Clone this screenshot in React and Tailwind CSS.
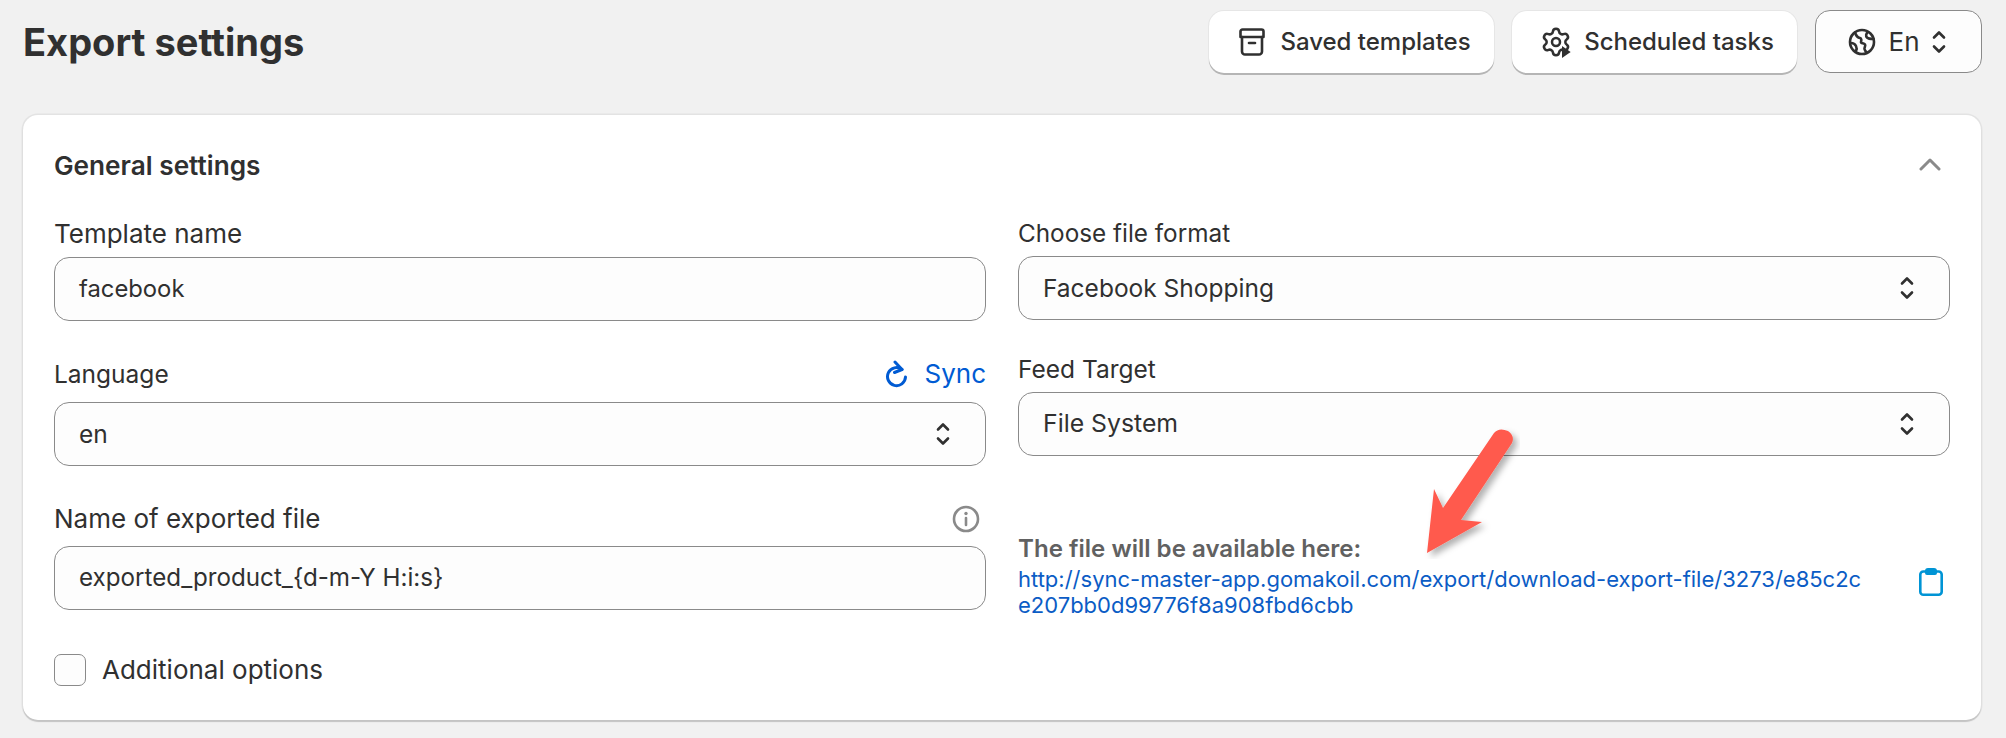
const font = { fontFamily: "Inter, sans-serif" };

const ArchiveIcon = () => (
  <svg viewBox="0 0 26 28" className="h-[28px] w-[26px]" fill="none" stroke="#303030" strokeWidth="2.6" strokeLinejoin="round" strokeLinecap="round">
    <path d="M3.500 1.500h19a2 2 0 0 1 2 2v5.500h-23v-5.500a2 2 0 0 1 2-2z" />
    <path d="M3 9v14.500a3 3 0 0 0 3 3h14a3 3 0 0 0 3-3v-14.500" />
    <path d="M10 15h6" />
  </svg>
);

const GearPlayIcon = () => (
  <svg viewBox="0 0 24 24" className="h-[32px] w-[32px]" fill="none" stroke="#303030" strokeWidth="1.900" strokeLinejoin="round" strokeLinecap="round">
    <path d="M9.671 4.136a2.34 2.34 0 0 1 4.659 0 2.34 2.34 0 0 0 3.319 1.915 2.34 2.34 0 0 1 2.33 4.033 2.34 2.34 0 0 0 0 3.831 2.34 2.34 0 0 1-2.33 4.033 2.34 2.34 0 0 0-3.319 1.915 2.34 2.34 0 0 1-4.659 0 2.34 2.34 0 0 0-3.32-1.915 2.34 2.34 0 0 1-2.33-4.033 2.34 2.34 0 0 0 0-3.831A2.34 2.34 0 0 1 6.35 6.051a2.34 2.34 0 0 0 3.32-1.915" />
    <circle cx="12" cy="12" r="3" />
    <path d="M16.500 15l6.500 4.500-6.500 4.500z" fill="#303030" stroke="none" />
  </svg>
);

const GlobeIcon = () => (
  <svg viewBox="0 0 28 28" className="h-[28px] w-[28px]" fill="none" stroke="#303030" strokeWidth="2.6" strokeLinejoin="round" strokeLinecap="round">
    <circle cx="14" cy="14" r="12" />
    <path d="M7 4.500c1 3 2 5 5 5.500 1.500.3 1.500 2.500 1 4-.5 1.500 3 1 4 2.500 1 1.500-1 3-.5 4.500.3 1 1 2 1.500 3" />
    <path d="M20 4c-2 1.500-2.500 4-1 5.500s4 1.500 6.500 1.500" />
    <path d="M3 15c2.500 0 4 1 5 3s1 3 0 5" />
  </svg>
);

const Selector = () => (
  <svg viewBox="0 0 14 26" className="h-[26px] w-[14px]" fill="none" stroke="#303030" strokeWidth="2.6" strokeLinejoin="round" strokeLinecap="round">
    <path d="M2 8.500l5-5 5 5" />
    <path d="M2 17.500l5 5 5-5" />
  </svg>
);

const Field = ({ children, trailing, size = "text-[24.500px]" }) => (
  <div className={`flex h-[64px] items-center justify-between rounded-[15px] border border-[#8a8a8a] bg-[#fdfdfd] pl-[24px] pr-[35px] text-[#303030] ${size}`}>
    <span>{children}</span>
    {trailing}
  </div>
);

const LabelRow = ({ children, right, className = "" }) => (
  <div className={`flex items-center justify-between leading-[30px] text-[#303030] ${className}`}>
    <span>{children}</span>
    {right}
  </div>
);

const TopButton = ({ icon, children, className = "" }) => (
  <button
    type="button"
    className={`flex h-[62px] w-[285px] items-center justify-center rounded-[15px] bg-white text-[24px] font-medium text-[#303030] shadow-[0_2px_0_#b5b5b5,0_0_0_1px_#e6e6e6] ${className}`}
  >
    {icon}
    {children}
  </button>
);

export default function App() {
  return (
    <main className="relative h-[738px] w-[2006px] overflow-hidden bg-[#f1f1f1]" style={font}>
      <header className="flex h-[115px] items-start justify-between pl-[23px] pr-[24px] pt-[11px]">
        <h1 className="pt-[8px] text-[38px] font-bold leading-[46px] text-[#303030]">Export settings</h1>
        <div className="flex gap-[18px]">
          <TopButton icon={<ArchiveIcon />} className="gap-[15px] pl-[7px]">Saved templates</TopButton>
          <TopButton icon={<GearPlayIcon />} className="gap-[12px] pl-[5px]">Scheduled tasks</TopButton>
          <button
            type="button"
            className="-mt-px flex h-[63px] w-[167px] items-center justify-center rounded-[15px] border border-[#8a8a8a] bg-[#fdfdfd] pr-[4px] text-[26px] text-[#303030]"
          >
            <GlobeIcon />
            <span className="ml-[13px] mr-[12px]">En</span>
            <Selector />
          </button>
        </div>
      </header>

      <section className="relative ml-[23px] h-[605px] w-[1958px] rounded-[15px] bg-white px-[31px] shadow-[0_2px_1px_#c4c4c4,0_0_0_1.500px_#e3e3e3]">
        <div className="flex h-[102px] items-center justify-between pr-[8px]">
          <h2 className="text-[26.200px] font-semibold text-[#303030]">General settings</h2>
          <svg viewBox="0 0 24 14" className="mb-[4px] h-[14px] w-[24px]" fill="none" stroke="#8a8a8a" strokeWidth="3" strokeLinecap="round" strokeLinejoin="round">
            <path d="M3 12l9-9 9 9" />
          </svg>
        </div>

        <div className="grid grid-cols-[932px_932px] gap-x-[32px]">
          <div>
            <LabelRow className="mt-[2px] mb-[8px] text-[26px]">Template name</LabelRow>
            <Field size="text-[23.800px]">facebook</Field>

            <LabelRow
              className="mt-[38px] mb-[13px] text-[24.500px]"
              right={
                <span className="flex items-center gap-[16px] text-[26px] text-[#005bd3]">
                  <svg viewBox="0 0 24 28" className="-ml-[1px] h-[28px] w-[24px]" fill="none" stroke="#005bd3" strokeWidth="3" strokeLinecap="round" strokeLinejoin="round">
                    <path d="M18 9.500a9 9 0 1 0 3.500 7.500" />
                    <path d="M11 2l7 7.500-7.500 3" />
                  </svg>
                  Sync
                </span>
              }
            >
              Language
            </LabelRow>
            <Field trailing={<Selector />}>en</Field>

            <LabelRow
              className="mt-[38px] mb-[12px] text-[26px]"
              right={
                <svg viewBox="0 0 28 28" className="mr-[6px] h-[28px] w-[28px]" fill="none" stroke="#8a8a8a" strokeWidth="2.600" strokeLinecap="round">
                  <circle cx="14" cy="14" r="12" />
                  <path d="M14 13v7" />
                  <circle cx="14" cy="8.500" r="1.700" fill="#8a8a8a" stroke="none" />
                </svg>
              }
            >
              Name of exported file
            </LabelRow>
            <Field size="text-[24.200px]">exported_product_{"{d-m-Y H:i:s}"}</Field>

            <label className="mt-[40px] flex items-center gap-[16px] text-[26px] text-[#303030]">
              <span className="h-[32px] w-[32px] rounded-[7px] border border-[#8a8a8a] bg-[#fdfdfd]" />
              Additional options
            </label>
          </div>

          <div>
            <LabelRow className="mt-[1px] mb-[8px] text-[24.300px]">Choose file format</LabelRow>
            <Field trailing={<Selector />}>Facebook Shopping</Field>

            <LabelRow className="mt-[34px] mb-[8px] text-[24.500px]">Feed Target</LabelRow>
            <Field trailing={<Selector />} size="text-[24.800px]">File System</Field>

            <div className="mt-[79px] flex items-start justify-between pr-[7px]">
              <div className="w-[846px]">
                <p className="text-[24.100px] font-semibold leading-[28px] text-[#616161]">The file will be available here:</p>
                <a href="#" className="mt-[3px] block break-all text-[22px] leading-[26px] text-[#0b5cc5]">
                  http://sync-master-app.gomakoil.com/export/download-export-file/3273/e85c2ce207bb0d99776f8a908fbd6cbb
                </a>
              </div>
              <svg viewBox="0 0 24 28" className="mt-[33px] h-[28px] w-[24px]" fill="none">
                <rect x="1.300" y="3.500" width="21.400" height="23.200" rx="3" stroke="#0094d5" strokeWidth="2.600" />
                <path d="M6 3a3 3 0 0 1 3-3h6a3 3 0 0 1 3 3v2a2 2 0 0 1-2 2h-8a2 2 0 0 1-2-2z" fill="#0094d5" />
              </svg>
            </div>
          </div>
        </div>

        <svg
          viewBox="0 0 120 140"
          className="pointer-events-none absolute left-[1377px] top-[304px] h-[140px] w-[120px]"
        >
          <defs>
            <filter id="arrowShadow" x="-30%" y="-30%" width="160%" height="160%">
              <feDropShadow dx="4" dy="4" stdDeviation="3" floodColor="#000" floodOpacity="0.3" />
            </filter>
          </defs>
          <path
            d="M27 134 L34 70 L43 89 L94 14 Q99 8 108 12 Q115 17 112 24 L61 101 L82 103 Z"
            fill="#ff5a4d"
            filter="url(#arrowShadow)"
          />
        </svg>
      </section>
    </main>
  );
}
